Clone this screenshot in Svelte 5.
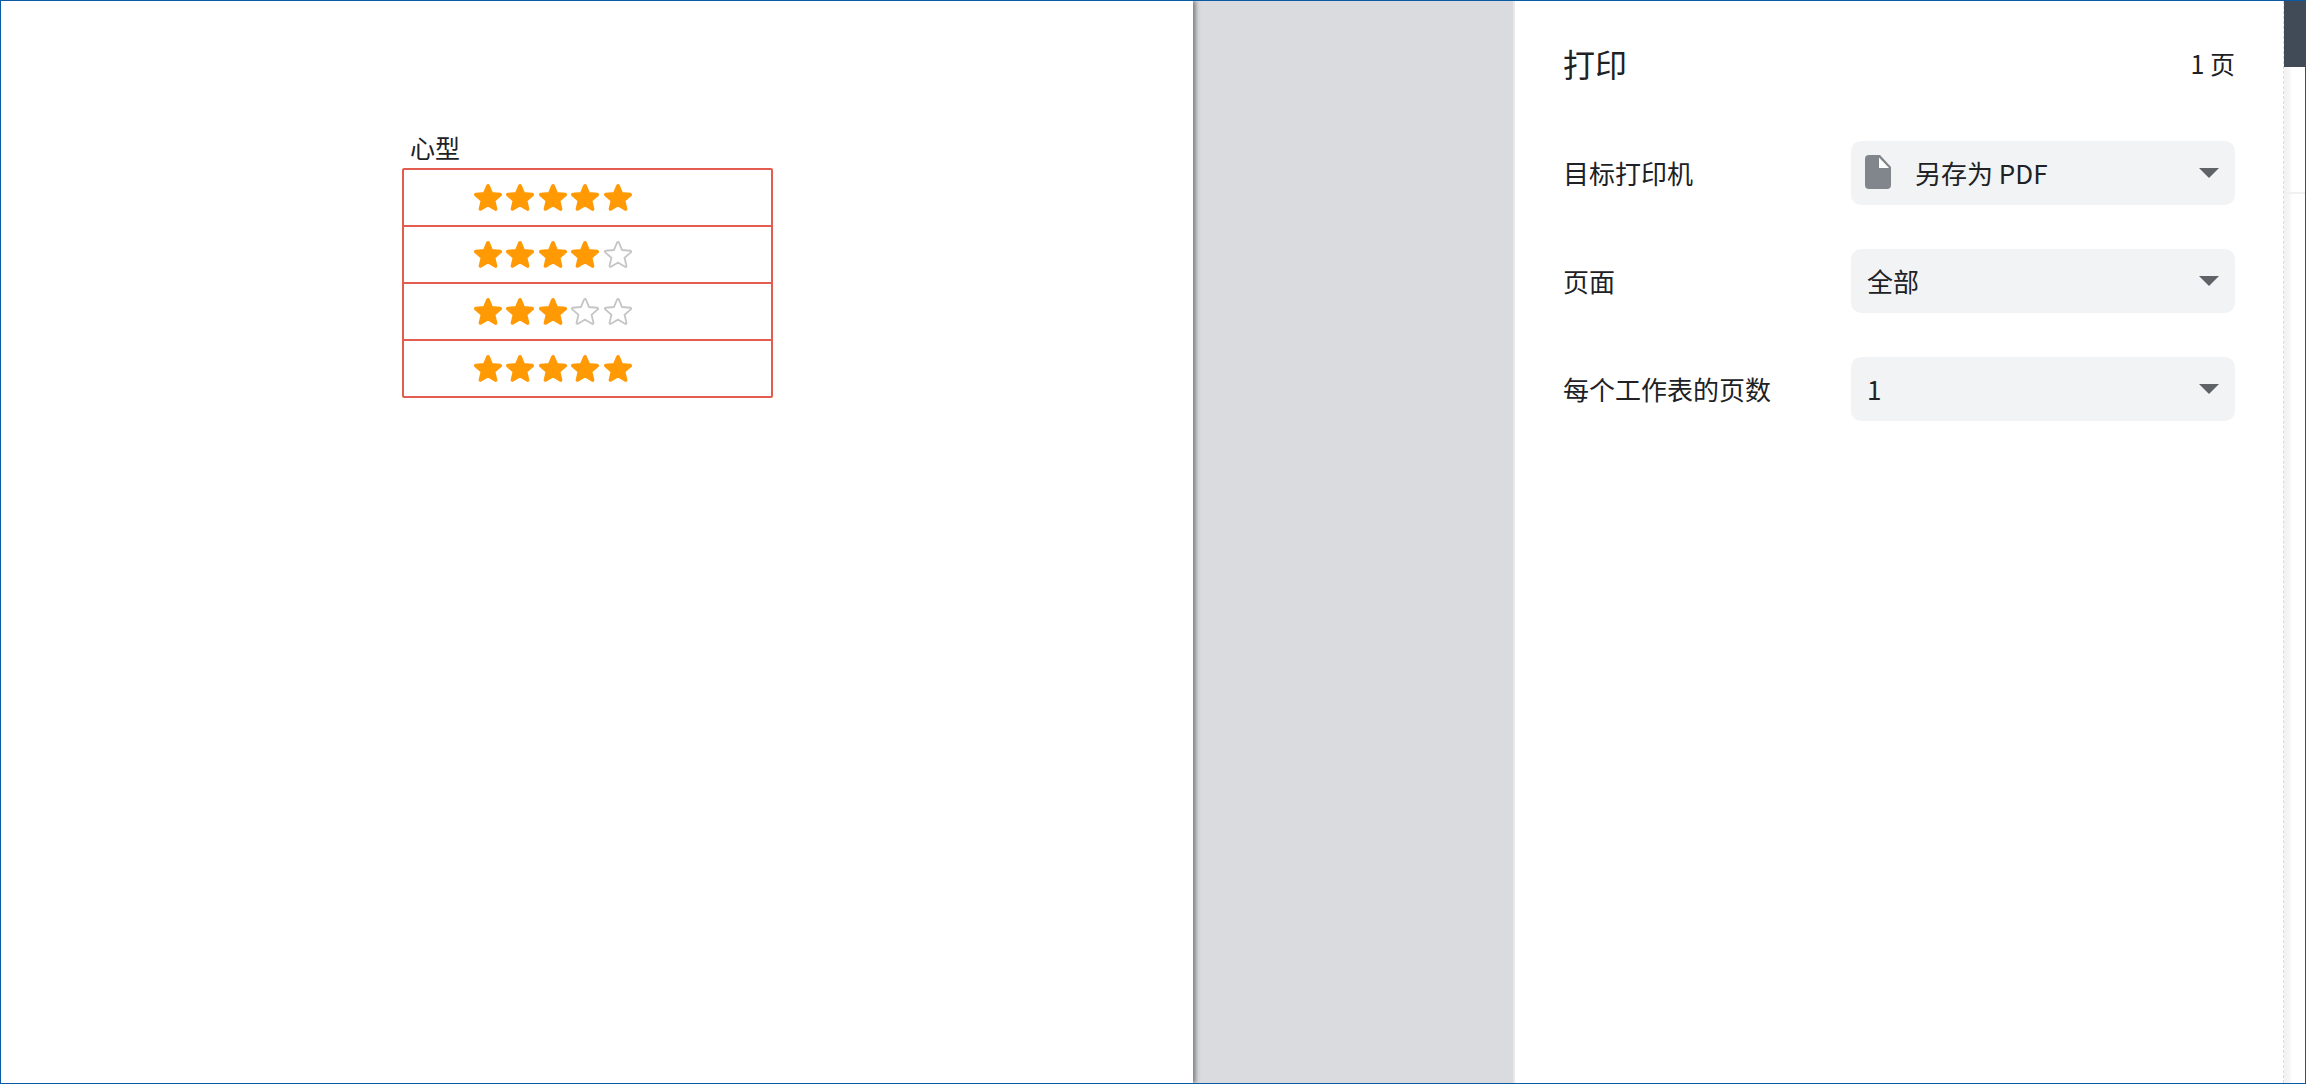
<script lang="ts">
    const starPath = "M12 17.27L18.18 21l-1.64-7.03L22 9.24l-7.19-.61L12 2 9.19 8.63 2 9.24l5.46 4.73L5.82 21z";
    const ratings = [5, 4, 3, 5];
    const stars = [1, 2, 3, 4, 5];

    const settings = [
        { label: "目标打印机", value: "另存为 PDF", icon: true },
        { label: "页面", value: "全部", icon: false },
        { label: "每个工作表的页数", value: "1", icon: false }
    ];
</script>

<div class="window">
    <div class="preview">
        <div class="sheet">
            <div class="caption">心型</div>
            <div class="table">
                {#each ratings as rating}
                    <div class="row">
                        {#each stars as n}
                            <svg class="star" class:off={n > rating} viewBox="0.5 0.5 23 22">
                                <path d={starPath} />
                                {#if n > rating}
                                    <path class="hole" d={starPath} />
                                {/if}
                            </svg>
                        {/each}
                    </div>
                {/each}
            </div>
        </div>
    </div>

    <div class="gutter"></div>

    <div class="panel">
        <div class="header">
            <h1>打印</h1>
            <span class="count">1 页</span>
        </div>
        {#each settings as item}
            <div class="setting">
                <span class="label">{item.label}</span>
                <div class="select">
                    {#if item.icon}
                        <svg class="file" viewBox="0 0 26 34">
                            <path d="M4 0h11l11 12v18a4 4 0 0 1-4 4H4a4 4 0 0 1-4-4V4a4 4 0 0 1 4-4z" fill="#80868b" />
                            <path d="M14 2.500l10 10.500h-10z" fill="#fff" />
                        </svg>
                    {/if}
                    <span class="value" class:with-icon={item.icon}>{item.value}</span>
                    <svg class="arrow" viewBox="0 0 20 10">
                        <path d="M0 0h20L10 10z" fill="#5f6368" />
                    </svg>
                </div>
            </div>
        {/each}
    </div>

    <div class="scroll">
        <div class="thumb"></div>
        <div class="track-top"></div>
        <div class="track-bottom"></div>
    </div>
</div>

<style>
    :global(body) {
        margin: 0;
    }
    .window {
        width: 2306px;
        height: 1084px;
        box-sizing: border-box;
        border: 1px solid #0a5aa5;
        display: flex;
        overflow: hidden;
        background: #fff;
        color: #202124;
        font-family: "Noto Sans CJK SC", "Noto Sans", sans-serif;
    }
    .preview {
        width: 1192px;
        flex-shrink: 0;
        background: #fff;
        box-shadow: 3px 0 4px rgba(60, 64, 67, 0.55);
        position: relative;
    }
    .sheet {
        width: 371px;
        margin-left: 401px;
        padding-top: 129px;
    }
    .caption {
        font-size: 25px;
        line-height: 34px;
        padding-left: 8px;
        margin-bottom: 4px;
    }
    .table {
        border: 2px solid #e25c4f;
        border-radius: 2px;
    }
    .row {
        height: 55px;
        padding-left: 70px;
        display: flex;
        align-items: center;
        gap: 4.400px;
        border-bottom: 2px solid #e25c4f;
    }
    .row:last-child {
        border-bottom: none;
    }
    .star {
        width: 28px;
        height: 26.800px;
        display: block;
    }
    .star path {
        fill: #ff9a05;
        stroke: #ff9a05;
        stroke-width: 3;
        stroke-linejoin: round;
    }
    .star.off path {
        fill: #c4c4c4;
        stroke: #c4c4c4;
    }
    .star.off path.hole {
        fill: #fff;
        stroke: #fff;
        stroke-width: 0.100;
    }
    .gutter {
        width: 320px;
        flex-shrink: 0;
        background: #dadbdf;
        border-right: 2px solid #e9e9eb;
    }
    .panel {
        flex: 1;
        min-width: 0;
        padding: 42px 48px 0;
        background: #fff;
    }
    .header {
        display: flex;
        justify-content: space-between;
        align-items: center;
        height: 40px;
        margin-bottom: 58px;
    }
    h1 {
        margin: 0;
        font-size: 32px;
        font-weight: 400;
    }
    .count {
        font-size: 25px;
    }
    .setting {
        display: grid;
        grid-template-columns: 288px 1fr;
        align-items: center;
        margin-bottom: 44px;
    }
    .label {
        font-size: 26px;
        padding-bottom: 2px;
    }
    .select {
        height: 64px;
        border-radius: 10px;
        background: #f1f3f4;
        padding: 0 16px 0 16px;
        display: flex;
        align-items: center;
    }
    .file {
        width: 26px;
        height: 34px;
        flex-shrink: 0;
        margin-left: -2px;
        margin-bottom: 2px;
    }
    .value {
        flex: 1;
        font-size: 26px;
        padding-bottom: 2px;
    }
    .value.with-icon {
        margin-left: 24px;
    }
    .arrow {
        width: 20px;
        height: 10px;
        flex-shrink: 0;
    }
    .scroll {
        width: 21px;
        flex-shrink: 0;
        border-left: 1px dashed #dcdcdc;
        background: linear-gradient(to right, #f1f1f1, #f7f7f7 6px, #fff 8px);
    }
    .thumb {
        height: 66px;
        background: #414b57;
    }
    .track-top {
        height: 125px;
        border-bottom: 2px solid #f1f1f1;
    }
    .track-bottom {
        height: 800px;
    }
</style>
